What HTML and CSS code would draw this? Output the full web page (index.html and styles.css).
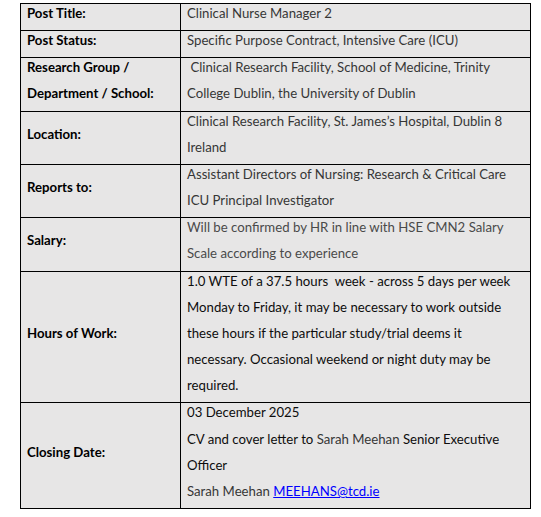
FILE: index.html
```html
<!DOCTYPE html>
<html lang="en">
<head>
<meta charset="utf-8">
<title>Post Details</title>
<link rel="stylesheet" href="styles.css">
</head>
<body>
<table class="post">
  <tr class="r1">
    <th class="label top"><div class="c">Post Title:</div></th>
    <td class="val"><div class="c grey">Clinical Nurse Manager 2</div></td>
  </tr>
  <tr>
    <th class="label top"><div class="c">Post Status:</div></th>
    <td class="val"><div class="c grey">Specific Purpose Contract, Intensive Care (ICU)</div></td>
  </tr>
  <tr>
    <th class="label top"><div class="c">Research Group /<br>Department / School:</div></th>
    <td class="val"><div class="c grey">&nbsp;Clinical Research Facility, School of Medicine, Trinity<br>College Dublin, the University of Dublin</div></td>
  </tr>
  <tr>
    <th class="label"><div class="c">Location:</div></th>
    <td class="val"><div class="c grey">Clinical Research Facility, St. James’s Hospital, Dublin 8<br>Ireland</div></td>
  </tr>
  <tr>
    <th class="label"><div class="c">Reports to:</div></th>
    <td class="val"><div class="c grey">Assistant Directors of Nursing: Research &amp; Critical Care<br>ICU Principal Investigator</div></td>
  </tr>
  <tr>
    <th class="label"><div class="c">Salary:</div></th>
    <td class="val"><div class="c light">Will be confirmed by HR in line with HSE CMN2 Salary<br>Scale according to experience</div></td>
  </tr>
  <tr>
    <th class="label"><div class="c">Hours of Work:</div></th>
    <td class="val"><div class="c dark">1.0 WTE of a 37.5 hours &nbsp;week - across 5 days per week<br>Monday to Friday, it may be necessary to work outside<br>these hours if the particular study/trial deems it<br>necessary. Occasional weekend or night duty may be<br>required.</div></td>
  </tr>
  <tr>
    <th class="label"><div class="c">Closing Date:</div></th>
    <td class="val"><div class="c dark">03 December 2025<br>CV and cover letter to <span class="grey">Sarah Meehan</span> Senior Executive<br>Officer<br><span class="grey">Sarah Meehan</span> <a class="mail" href="mailto:MEEHANS@tcd.ie">MEEHANS@tcd.ie</a></div></td>
  </tr>
</table>
</body>
</html>
```
FILE: styles.css
```css
html, body {
  background: #ffffff;
}
body {
  margin: 3px 0 0 20px;
  font-family: Lato, "Open Sans", sans-serif;
  font-size: 13.2px;
}
.post {
  border-collapse: collapse;
  width: 511px;
  table-layout: fixed;
}
.post th, .post td {
  border: 1px solid #000;
  background: #e7e6e6;
  padding: 0 6px;
  line-height: 26.15px;
  text-align: left;
  white-space: nowrap;
  vertical-align: middle;
}
.post th.label {
  width: 147px;
  font-weight: 700;
  color: #000;
}
.post th.top {
  vertical-align: top;
}
.post td.val {
  vertical-align: top;
}
.c {
  margin: -4px 0 4px;
}
.grey {
  color: #363636;
}
.light {
  color: #4a4a4a;
}
.dark {
  color: #0d0d0d;
}
.mail {
  color: #0000ff;
  text-decoration: underline;
}
```
